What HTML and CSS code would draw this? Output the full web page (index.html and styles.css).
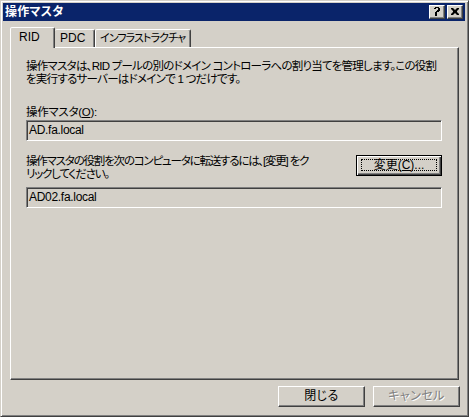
FILE: index.html
```html
<!DOCTYPE html>
<html lang="ja">
<head>
<meta charset="utf-8">
<link rel="stylesheet" href="styles.css">
</head>
<body>
<div class="window">
  <div class="titlebar">
    <span class="title">操作マスタ</span>
    <div class="tbtns">
      <span class="tbtn">
        <svg width="8" height="9" viewBox="0 0 8 9"><path d="M1 1h1v-1h4v1h1v3h-1v1h-2v2h-2v-2h1v-1h1v-1h1v-2h-2v1h-2z M2 7h2v2h-2z" fill="#000"/></svg>
      </span>
      <span class="tbtn">
        <svg width="8" height="7" viewBox="0 0 8 7"><path d="M0 0h2l2 2 2-2h2v1l-2 2v1l2 2v1h-2l-2-2-2 2h-2v-1l2-2v-1l-2-2z" fill="#000"/></svg>
      </span>
    </div>
  </div>
  <div class="body">
    <div class="tabs">
      <div class="tab active">RID</div>
      <div class="tab">PDC</div>
      <div class="tab">インフラストラクチャ</div>
    </div>
    <div class="panel">
      <p class="desc">操作マスタは、RID プールの別のドメイン コントローラへの割り当てを管理します。この役割<br>を実行するサーバーはドメインで 1 つだけです。</p>
      <div class="label">操作マスタ(<u>O</u>):</div>
      <div class="field">AD.fa.local</div>
      <div class="row">
        <p class="desc2">操作マスタの役割を次のコンピュータに転送するには、[変更] をク<br>リックしてください。</p>
        <button class="btn default"><span class="focus">変更(<u>C</u>)...</span></button>
      </div>
      <div class="field second">AD02.fa.local</div>
    </div>
    <div class="footer">
      <button class="btn">閉じる</button>
      <button class="btn disabled">キャンセル</button>
    </div>
  </div>
</div>
</body>
</html>
```
FILE: styles.css
```css
* { box-sizing: border-box; }
html, body { margin: 0; padding: 0; }
body {
  width: 469px;
  height: 417px;
  background: #d4d0c8;
  font-family: "Liberation Sans", "Noto Sans CJK JP", sans-serif;
  font-size: 12px;
  font-feature-settings: "palt";
  color: #000;
}
.window {
  width: 469px;
  height: 417px;
  background: #d4d0c8;
  border: 1px solid;
  border-color: #d4d0c8 #404040 #404040 #d4d0c8;
  box-shadow: inset 1px 1px #fff, inset -1px -1px #808080;
  padding: 2px 3px 3px 2px;
  display: flex;
  flex-direction: column;
}
.titlebar {
  height: 18px;
  background: #0a246a;
  display: flex;
  align-items: center;
  justify-content: space-between;
  padding: 0 2px 0 2px;
}
.title {
  color: #fff;
  font-weight: bold;
  font-size: 12px;
  line-height: 18px;
  letter-spacing: 0.2px;
}
.tbtns { display: flex; gap: 2px; }
.tbtn {
  width: 16px;
  height: 14px;
  background: #d4d0c8;
  border: 1px solid;
  border-color: #fff #404040 #404040 #fff;
  box-shadow: inset -1px -1px #808080;
  display: flex;
  align-items: center;
  justify-content: center;
  padding-bottom: 1px;
}
.body {
  flex: 1;
  display: flex;
  flex-direction: column;
  padding: 7px 6px 6px 7px;
}
.tabs {
  display: flex;
  align-items: flex-end;
  height: 20px;
  position: relative;
  z-index: 1;
  margin-bottom: -1px;
}
.tab {
  height: 18px;
  padding: 0 4px;
  line-height: 17px;
  white-space: nowrap;
  overflow: hidden;
  border: 1px solid;
  border-bottom: none;
  border-color: #fff #404040 transparent #fff;
  box-shadow: inset -1px 0 #808080;
  border-radius: 2px 2px 0 0;
  background: #d4d0c8;
  margin-bottom: 1px;
}
.tab:nth-child(2) { width: 40px; padding-left: 5px; }
.tab:nth-child(3) { width: 96px; padding-left: 4px; font-size: 11px; letter-spacing: -0.9px; }
.tab.active {
  width: 45px;
  height: 21px;
  padding-left: 8px;
  line-height: 19px;
  margin-bottom: 0;
}
.tab.active + .tab { border-left: none; }
.panel {
  flex: 1;
  border: 1px solid;
  border-color: #fff #404040 #404040 #fff;
  box-shadow: inset -1px -1px #808080;
  padding: 12px 16px 0 15px;
  display: flex;
  flex-direction: column;
}
.desc, .desc2 {
  margin: 0;
  font-size: 11.5px;
  line-height: 13px;
  white-space: nowrap;
}
.desc { letter-spacing: -0.75px; }
.desc2 { letter-spacing: -1.2px; }
.label {
  margin-top: 20px;
  line-height: 13px;
  font-size: 11.5px;
  letter-spacing: -0.3px;
}
.label u, .btn u { text-underline-offset: 1px; }
.field {
  margin-top: 1px;
  height: 21px;
  border: 1px solid;
  border-color: #808080 #fff #fff #808080;
  box-shadow: inset 1px 1px #404040, inset -1px -1px #d4d0c8;
  padding: 0 2px;
  line-height: 18px;
  letter-spacing: -0.3px;
}
.row {
  margin-top: 14px;
  display: flex;
  justify-content: space-between;
  align-items: flex-start;
}
.field.second { margin-top: 6px; }
.btn {
  font: inherit;
  font-feature-settings: "palt";
  width: 87px;
  height: 21px;
  padding: 0;
  background: #d4d0c8;
  color: #000;
  border: 1px solid;
  border-color: #fff #404040 #404040 #fff;
  box-shadow: inset -1px -1px #808080;
  line-height: 17px;
  letter-spacing: 0.5px;
}
.btn.default {
  width: 86px;
  border: 1px solid #000;
  box-shadow: inset 1px 1px #fff, inset -1px -1px #404040, inset -2px -2px #808080;
  padding: 3px 4px 4px 4px;
  display: flex;
}
.focus {
  flex: 1;
  border: 1px dotted #000;
  line-height: 11px;
  letter-spacing: 0;
}
.footer {
  display: flex;
  justify-content: flex-end;
  gap: 8px;
  padding-top: 6px;
  margin-right: -1px;
}
.btn.disabled {
  color: #808080;
  text-shadow: 1px 1px #fff;
}
```
